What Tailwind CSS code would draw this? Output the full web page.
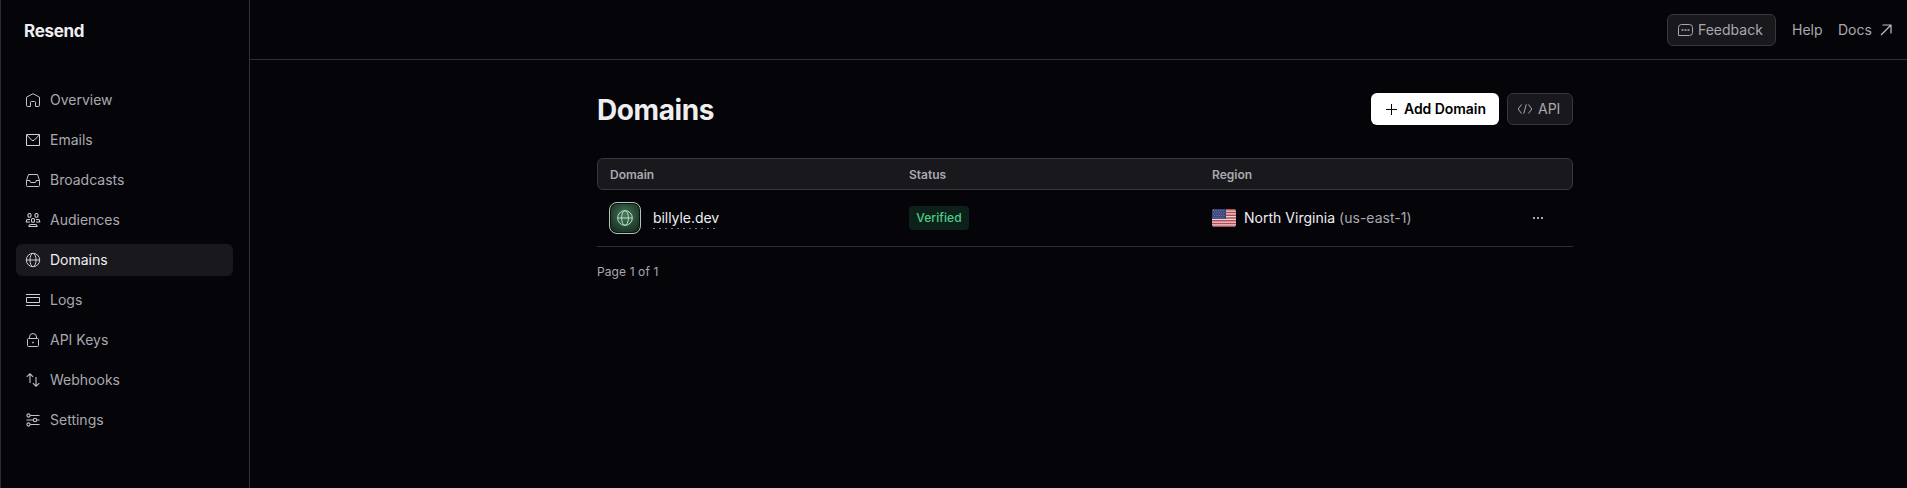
<!DOCTYPE html>
<html lang="en">
<head>
<meta charset="utf-8">
<title>Domains · Resend</title>
<script src="https://cdn.jsdelivr.net/npm/@tailwindcss/browser@4"></script>
</head>
<body class="flex h-[488px] w-full overflow-hidden border-l border-[#2d2d33] bg-[#050409] font-[Inter,sans-serif] text-sm text-[#a8a9ae] antialiased">
<aside class="flex w-[249px] shrink-0 flex-col border-r border-[#303035] pl-[15px] pr-4">
  <div class="flex h-[60px] items-center pl-2 pt-0.5 text-[17px] font-bold tracking-[-0.3px] text-[#eeeef0]"><span>Resend</span></div>
  <nav class="mt-6 flex flex-col gap-2">
    <a class="flex h-8 items-center gap-[9px] rounded-md pl-[9px]"><svg class="size-4 shrink-0" viewBox="-.5 -.5 16 16" fill="none" stroke="#c4c4c8" stroke-linejoin="round"><path d="M1 4.700 7.500 1.200 14 4.700v8a1.300 1.300 0 0 1-1.300 1.300H10v-4a1 1 0 0 0-1-1H6a1 1 0 0 0-1 1v4H2.300A1.300 1.300 0 0 1 1 12.700z"/></svg><span>Overview</span></a>
    <a class="flex h-8 items-center gap-[9px] rounded-md pl-[9px]"><svg class="size-4 shrink-0" viewBox="-.5 -.5 16 16" fill="none" stroke="#d4d4d8"><path d="M1 2h13v11H1zM1.300 2.500l4.700 5q1.500 1.400 3 0l4.700-5"/></svg><span>Emails</span></a>
    <a class="flex h-8 items-center gap-[9px] rounded-md pl-[9px]"><svg class="size-4 shrink-0" viewBox="-.5 -.5 16 16" fill="none" stroke="#c4c4c8" stroke-linejoin="round"><path d="M3 2h9l2 6v5a1 1 0 0 1-1 1H2a1 1 0 0 1-1-1V8zM1 8h3.500v1a1 1 0 0 0 1 1h4a1 1 0 0 0 1-1V8H14"/></svg><span>Broadcasts</span></a>
    <a class="flex h-8 items-center gap-[9px] rounded-md pl-[9px]"><svg class="size-4 shrink-0" viewBox="-.5 -.5 16 16" fill="none" stroke="#d0d0d4" stroke-width="1.100"><rect x="2.500" y="1" width="3" height="3.700" rx="1.300"/><rect x="9.500" y="1" width="3" height="3.700" rx="1.300"/><rect x="6" y="6" width="3" height="3.800" rx="1.300"/><path d="M4.500 9.500H.8V8.700q0-1.700 1.700-1.700h2M10.500 9.500h3.700V8.700q0-1.700-1.700-1.700h-2M3.500 14v-.4q0-1.600 2.200-1.600h3.600q2.200 0 2.200 1.600v.4z"/></svg><span>Audiences</span></a>
    <a class="flex h-8 items-center gap-[9px] rounded-md bg-[#19181d] pl-[9px] text-[#eeeef0]"><svg class="size-4 shrink-0" viewBox="-.5 -.5 16 16" fill="none" stroke="#d0d0d4"><circle cx="7.500" cy="7.500" r="6.700"/><ellipse cx="7.500" cy="7.500" rx="3" ry="6.700"/><path d="M.8 7.500h13.400"/></svg><span>Domains</span></a>
    <a class="flex h-8 items-center gap-[9px] rounded-md pl-[9px]"><svg class="size-4 shrink-0" viewBox="-.5 -.5 16 16" fill="none" stroke="#d0d0d4"><path d="M.5 2h14M.5 13h14M1 5h13v5H1z"/></svg><span>Logs</span></a>
    <a class="flex h-8 items-center gap-[9px] rounded-md pl-[9px]"><svg class="size-4 shrink-0" viewBox="-.5 -.5 16 16" fill="none" stroke="#c4c4c8"><rect x="2" y="6" width="11" height="8" rx="1"/><path d="M4 6V4.500Q4 1 7.500 1T11 4.500V6"/><path d="M6.700 9.200h1.600v1.600H6.700z" fill="#c4c4c8" stroke="none"/></svg><span>API Keys</span></a>
    <a class="flex h-8 items-center gap-[9px] rounded-md pl-[9px]"><svg class="size-4 shrink-0" viewBox="-.5 -.5 16 16" fill="none" stroke="#c4c4c8" stroke-width="1.100"><path d="M4.500 10.500V1.500M1.200 4.300l3.300-3 3.100 3M10.500 4.500v9M7.400 10.700l3.100 3 3.300-3"/></svg><span>Webhooks</span></a>
    <a class="flex h-8 items-center gap-[9px] rounded-md pl-[9px]"><svg class="size-4 shrink-0" viewBox="-.5 -.5 16 16" fill="none" stroke="#c4c4c8" stroke-width="1.100"><circle cx="3" cy="3" r="1.600"/><circle cx="9.500" cy="7.500" r="1.700"/><circle cx="3" cy="12" r="1.600"/><path d="M4.600 3H14M1 7.500h6.800M11.200 7.500H14M4.600 12H14"/></svg><span>Settings</span></a>
  </nav>
</aside>
<div class="flex min-w-0 flex-1 flex-col">
  <header class="flex h-[60px] shrink-0 items-center justify-end border-b border-[#303035] pr-[15px]">
    <button class="mt-px flex h-8 w-[109px] items-center gap-1 rounded-md border border-[#35383d] bg-[#19181d] pl-[9px]"><svg class="size-[17px] shrink-0" viewBox="0 0 17 17" fill="none" stroke="#a8a9ae"><path d="M1.500 13.500v-8a3 3 0 0 1 3-3h8a3 3 0 0 1 3 3v5a3 3 0 0 1-3 3z"/><path d="M4.500 8h2M7.500 8h2M10.500 8h2" stroke-width="1.300"/></svg><span>Feedback</span></button>
    <a class="ml-4 mt-px w-[31px]">Help</a>
    <a class="ml-[15px] mt-px flex items-center gap-[9px]"><span class="w-[33px]">Docs</span><svg class="size-3" viewBox="0 0 12 12" fill="none" stroke="#c0c0c4" stroke-width="1.200"><path d="M1 11 10.500 1.500M2.500 1h8.500v8.500"/></svg></a>
  </header>
  <main class="ml-[347px] w-[976px]">
    <div class="mt-[33px] flex h-8 items-center justify-between">
      <h1 class="pt-0.5 text-[28px] leading-8 font-bold tracking-[-0.4px] text-[#eeeef0]">Domains</h1>
      <div class="flex gap-2">
        <button class="flex h-8 w-32 items-center gap-[6px] rounded-md bg-white pl-[14px] font-semibold text-black"><svg class="size-[13px] shrink-0" viewBox="0 0 13 13" stroke="#000"><path d="M6.500 1v11M1 6.500h11"/></svg><span class="whitespace-nowrap tracking-[-0.05px]">Add Domain</span></button>
        <button class="flex h-8 w-[66px] items-center gap-[5px] rounded-md border border-[#35383d] bg-[#19181d] pl-[9px]"><svg class="size-4 shrink-0" viewBox="0 0 16 16" fill="none" stroke="#a8a9ae"><path d="M4.500 3.500 1.200 8l3.300 4.500M11.500 3.500 14.800 8l-3.300 4.500M9.300 3.300 6.700 12.700"/></svg><span>API</span></button>
      </div>
    </div>
    <div class="mt-[33px] grid h-8 grid-cols-[299px_303px_1fr] items-center rounded-md border border-[#35383d] bg-[#19181d] pl-3 pt-0.5 text-xs font-semibold"><span>Domain</span><span>Status</span><span>Region</span></div>
    <div class="grid h-[57px] grid-cols-[300px_303px_1fr_28px] items-center border-b border-[#2d2d33] pl-3 pr-[13px] text-[#eeeef0]">
      <div class="flex items-center gap-3">
        <div class="flex size-8 items-center justify-center rounded-[8px] border border-[#b4c4ba] bg-[#08150d]">
          <div class="flex size-7 items-center justify-center rounded-[6px] bg-[radial-gradient(circle_at_50%_40%,#477b5c,#284735_55%,#10271a)]"><svg class="size-4" viewBox="0 0 16 16" fill="none" stroke="#b8e0c8"><circle cx="8" cy="8" r="7.300"/><ellipse cx="8" cy="8" rx="3.400" ry="7.300"/><path d="M.7 8h14.600"/></svg></div>
        </div>
        <a class="relative"><span class="tracking-[-0.05px]">billyle.dev</span><span class="absolute inset-x-0 top-[20px] h-px bg-[repeating-linear-gradient(90deg,#77777c_0_2px,transparent_2px_6px)]"></span></a>
      </div>
      <div><span class="flex h-6 w-[60px] items-center justify-center rounded-[4px] bg-[#0c211a] text-xs font-medium tracking-[0.1px] text-[#4fce86]">Verified</span></div>
      <div class="flex items-center gap-2">
        <svg class="h-[18px] w-6 rounded-[3px]" viewBox="0 0 24 18"><path fill="#dcdcdc" d="M0 0h24v18H0z"/><path stroke="#bd4650" stroke-width="1.385" d="M0 .7h24M0 3.460h24M0 6.230h24M0 9h24M0 11.770h24M0 14.540h24M0 17.300h24"/><path fill="#34427a" d="M0 0h14v9.700H0z"/><path stroke="#8e98bd" stroke-width=".8" stroke-dasharray="1 1.400" d="M1 1.500h12M2 3.200h11M1 4.900h12M2 6.600h11M1 8.300h12"/></svg>
        <span class="whitespace-nowrap tracking-[0.02px]">North Virginia <span class="text-[#a8a9ae]">(us-east-1)</span></span>
      </div>
      <svg class="h-4 w-3" viewBox="0 0 12 16" fill="#a8a9ae"><path d="M1 7h2v2H1zM5 7h2v2H5zM9 7h2v2H9z"/></svg>
    </div>
    <p class="mt-4 text-xs leading-[18px] tracking-[0.1px]">Page 1 of 1</p>
  </main>
</div>
</body>
</html>
